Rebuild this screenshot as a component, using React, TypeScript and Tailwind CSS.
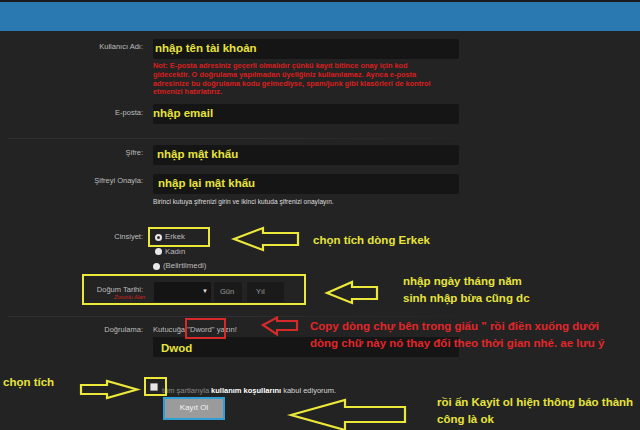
import React from 'react'

const hint = "font-['Liberation_Sans',Arial,sans-serif] font-bold text-[11.5px] text-[#e6e33c] leading-none whitespace-nowrap"

function Arrow({ w, h, pts, color }: { w: number; h: number; pts: string; color: string }) {
  return (
    <svg width={w} height={h} viewBox={`0 0 ${w} ${h}`} className="overflow-visible">
      <polygon points={pts} fill="none" stroke={color} strokeWidth={2.2} strokeLinejoin="miter" />
    </svg>
  )
}

function Label({ children, className = '' }: { children: React.ReactNode; className?: string }) {
  return (
    <div className={`w-[143px] shrink-0 text-right text-[7.5px] text-[#bdbdbd] leading-[10px] ${className}`}>
      {children}
    </div>
  )
}

function Field({ text, h = 'h-5', indent = 'pl-[2px]' }: { text?: string; h?: string; indent?: string }) {
  return (
    <div className={`w-[306px] ${h} bg-[#151515] rounded-[2px] flex items-center ${indent}`}>
      {text && <span className={hint}>{text}</span>}
    </div>
  )
}

function Separator() {
  return <div className="ml-[8px] w-[470px] h-px bg-gradient-to-r from-[#2f2f2f] via-[#2f2f2f] to-[#242424]" />
}

function Radio({ checked }: { checked?: boolean }) {
  return (
    <span className="w-[7px] h-[7px] rounded-full bg-[#e8e8e8] flex items-center justify-center shrink-0">
      {checked && <span className="w-[3px] h-[3px] rounded-full bg-[#333]" />}
    </span>
  )
}

export default function App() {
  return (
    <div className="relative w-[640px] h-[430px] overflow-hidden bg-[#232323] font-['Liberation_Sans',Arial,sans-serif]">
      {/* Header */}
      <div className="h-[2px] bg-[#1a1b1d]" />
      <div className="h-[29px] bg-[#2a79b0]" />

      <div className="flex flex-col">
        {/* Kullanıcı Adı */}
        <div className="flex gap-[10px] mt-[8px]">
          <Label className="pt-[3px]">Kullanıcı Adı:</Label>
          <div className="flex flex-col">
            <Field text="nhập tên tài khoản" />
            <div className="mt-[3px] w-[306px] text-[7.4px] font-bold leading-[8.75px] text-[#d81f1f] whitespace-nowrap">
              <div>Not: E-posta adresiniz geçerli olmalıdır çünkü kayıt bitince onay için kod</div>
              <div>gidecektir. O doğrulama yapılmadan üyeliğiniz kullanılamaz. Ayrıca e-posta</div>
              <div>adresinize bu doğrulama kodu gelmediyse, spam/junk gibi klasörleri de kontrol</div>
              <div>etmenizi hatırlatırız.</div>
            </div>
          </div>
        </div>

        {/* E-posta */}
        <div className="flex gap-[10px] mt-[7px]">
          <Label className="pt-[4px]">E-posta:</Label>
          <Field text="nhập email" indent="pl-0" />
        </div>

        <div className="mt-[14px]">
          <Separator />
        </div>

        {/* Şifre */}
        <div className="flex gap-[10px] mt-[6px]">
          <Label className="pt-[3px]">Şifre:</Label>
          <Field text="nhập mật khẩu" indent="pl-[4px]" />
        </div>
        <div className="flex gap-[10px] mt-[9px]">
          <Label className="pt-[2px]">Şifreyi Onayla:</Label>
          <div className="flex flex-col">
            <Field text="nhập lại mật khẩu" indent="pl-[5px]" />
            <div className="mt-[3px] text-[6.6px] leading-[10px] text-[#dedede] whitespace-nowrap">
              Birinci kutuya şifrenizi girin ve ikinci kutuda şifrenizi onaylayın.
            </div>
          </div>
        </div>

        {/* Cinsiyet */}
        <div className="flex gap-[10px] mt-[23px]">
          <Label className="pt-[2px]">Cinsiyet:</Label>
          <div className="flex flex-col text-[7.8px] text-[#bdbdbd] leading-[14.5px]">
            <div className="flex items-center gap-[3px] pl-[2px]"><Radio checked />Erkek</div>
            <div className="flex items-center gap-[3px] pl-[2px]"><Radio />Kadın</div>
            <div className="flex items-center gap-[3px]"><Radio />(Belirtilmedi)</div>
          </div>
        </div>

        {/* Doğum Tarihi */}
        <div className="flex gap-[10px] mt-[8px]">
          <div className="w-[145px] shrink-0 -mr-[2px] flex flex-col items-end pr-[2px] pt-[3px]">
            <span className="text-[7.5px] text-[#bdbdbd] leading-[9px]">Doğum Tarihi:</span>
            <span className="text-[5.5px] italic text-[#d42222] leading-[7px] -mr-[2px]">Zorunlu Alan</span>
          </div>
          <div className="flex gap-[3px] pl-[1px] text-[7.5px] text-[#9a9a9a]">
            <div className="w-[57px] h-5 bg-[#141414] flex items-center justify-end pr-[3px] text-[6px] text-[#e0e0e0]">▼</div>
            <div className="w-[28px] h-5 bg-[#1a1a1a] flex items-center pl-[6px]">Gün</div>
            <div className="w-[37px] h-5 bg-[#1a1a1a] flex items-center pl-[9px] ml-[2px]">Yıl</div>
          </div>
        </div>

        <div className="mt-[14px]">
          <Separator />
        </div>

        {/* Doğrulama */}
        <div className="flex gap-[10px] mt-[8px]">
          <Label>Doğrulama:</Label>
          <div className="flex flex-col">
            <div className="text-[7.6px] text-[#bdbdbd] leading-[10px] whitespace-nowrap">Kutucuğa "Dword" yazın!</div>
            <div className="mt-[2px] w-[306px] h-5 bg-[#151515] flex items-end pl-[8px] pb-[2px]">
              <span className={hint}>Dwod</span>
            </div>
          </div>
        </div>

        {/* Kullanım koşulları */}
        <div className="flex flex-col mt-[29px] pl-[150px]">
          <div className="flex items-center gap-[4px] text-[7.5px] leading-[10px] whitespace-nowrap">
            <span className="relative -top-[4px] w-[8px] h-[8px] bg-[#e6e6e6] rounded-[1px] border border-[#999]" />
            <span className="text-[#8a8a8a]">tüm şartlarıyla</span>
            <span className="text-white font-bold -ml-[2px]">kullanım koşullarını</span>
            <span className="text-[#d6d6d6] -ml-[2px]">kabul ediyorum.</span>
          </div>
          <div className="mt-[1px] ml-[13px] w-[62px] h-[23px] bg-[#9b9b9b] border-2 border-[#2f9fd6] flex items-center justify-center text-[8px] text-[#f4f4f4]">
            Kayıt Ol
          </div>
        </div>
      </div>

      {/* Annotations */}
      <div className="absolute left-[148px] top-[227px] w-[62px] h-[20px] border-2 border-[#ece83a]" />
      <div className="absolute left-[233px] top-[227px]">
        <Arrow w={66} h={24} color="#ece83a" pts="1,12 30,1 30,6 65,6 65,18 30,18 30,23" />
      </div>
      <div className={`absolute left-[313px] top-[235px] ${hint}`}>chọn tích dòng Erkek</div>

      <div className="absolute left-[82px] top-[274px] w-[224px] h-[31px] border-2 border-[#ece83a]" />
      <div className="absolute left-[326px] top-[281px]">
        <Arrow w={52} h={23} color="#ece83a" pts="1,12 26,1 26,6 51,6 51,18 26,18 26,22" />
      </div>
      <div className={`absolute left-[403px] top-[276px] flex flex-col gap-[5px] ${hint}`}>
        <span>nhập ngày tháng năm</span>
        <span>sinh nhập bừa cũng dc</span>
      </div>

      <div className="absolute left-[185px] top-[318px] w-[41px] h-[21px] border-2 border-[#d62a2a]" />
      <div className="absolute left-[262px] top-[317px]">
        <Arrow w={36} h={19} color="#d62a2a" pts="1,8 15,0.5 15,4 35,4 35,13 15,13 15,17.5" />
      </div>
      <div className="absolute left-[310px] top-[321px] flex flex-col gap-[5px] font-bold text-[11.5px] leading-none text-[#e2262a] whitespace-nowrap">
        <span>Copy dòng chự bên trong giấu " rồi điền xuống dưới</span>
        <span>dòng chữ này nó thay đổi theo thời gian nhé. ae lưu ý</span>
      </div>

      <div className={`absolute left-[3px] top-[377px] ${hint}`}>chọn tích</div>
      <div className="absolute left-[80px] top-[380px]">
        <Arrow w={58} h={19} color="#ece83a" pts="1,5 27,5 27,1 57,9.5 27,18 27,14 1,14" />
      </div>
      <div className="absolute left-[144px] top-[377px] w-[23px] h-[19px] border-2 border-[#ece83a]" />

      <div className="absolute left-[290px] top-[399px]">
        <Arrow w={116} h={32} color="#ece83a" pts="1,16 55,1 55,8 115,8 115,23 55,23 55,31" />
      </div>
      <div className={`absolute left-[437px] top-[397px] flex flex-col gap-[5px] ${hint}`}>
        <span>rồi ấn Kayit ol hiện thông báo thành</span>
        <span>công là ok</span>
      </div>
    </div>
  )
}
